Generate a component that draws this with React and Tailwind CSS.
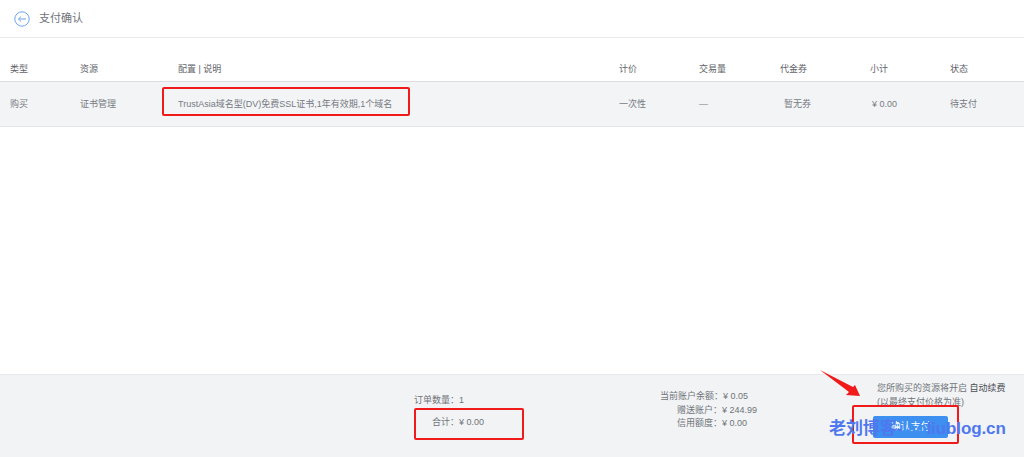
const font = { fontFamily: '"Liberation Sans", "Noto Sans CJK SC", sans-serif' };

const columns = [
  { title: '类型', width: 'w-[70px]' },
  { title: '资源', width: 'w-[98px]' },
  { title: '配置 | 说明', width: 'w-[441px]' },
  { title: '计价', width: 'w-[80px]' },
  { title: '交易量', width: 'w-[81px]' },
  { title: '代金券', width: 'w-[90px]' },
  { title: '小计', width: 'w-[80px]' },
  { title: '状态', width: 'w-[64px]' },
];

const cells = [
  '购买',
  '证书管理',
  'TrustAsia域名型(DV)免费SSL证书,1年有效期,1个域名',
  '一次性',
  '—',
  '暂无券',
  '¥ 0.00',
  '待支付',
];

export default function App() {
  return (
    <div className="relative flex h-[457px] w-[1024px] flex-col overflow-hidden bg-white text-[9px] text-[#777b82]" style={font}>
      <div className="flex h-[38px] items-center gap-[9px] border-b border-[#ececee] pl-[14px] text-[11px] text-[#6f747b]">
        <svg width="16" height="16" viewBox="0 0 16 16" fill="none" stroke="#6ba5ec" strokeWidth="1">
          <circle cx="8" cy="8" r="7.2" />
          <path d="M12 8H4.5M7.2 5.4 4.5 8l2.7 2.6" />
        </svg>
        <span>支付确认</span>
      </div>

      <div className="mt-[17px] flex h-[27px] items-center border-b border-[#dcdde0] pl-[10px] pt-[3px] text-[#5f6369]">
        {columns.map((c) => (
          <div key={c.title} className={c.width}>{c.title}</div>
        ))}
      </div>

      <div className="relative flex h-[45px] items-center border-b border-[#e3e4e8] bg-[#f3f4f6] pl-[10px] pt-[2px]">
        {cells.map((text, i) => (
          <div key={i} className={`${columns[i].width} ${i === 5 ? 'pl-[4px]' : ''} ${i === 6 ? 'pl-[2px]' : ''}`}>{text}</div>
        ))}
        <div className="absolute left-[162px] top-[5px] h-[29px] w-[248px] rounded-[2px] border-2 border-[#f01a1a]" />
      </div>

      <div className="flex-1" />

      <div className="relative flex h-[83px] border-t border-[#e8e9ea] bg-[#f2f3f4] text-[#6f747b]">
        <div className="ml-[414px] mt-[14px] w-[100px] leading-[22px]">
          <div>订单数量：1</div>
          <div className="pl-[18px]">合计：¥ 0.00</div>
        </div>
        <div className="ml-[146px] mt-[15px] w-[130px] leading-[13.5px]">
          <div>当前账户余额：¥ 0.05</div>
          <div className="pl-[17px]">赠送账户：¥ 244.99</div>
          <div className="pl-[17px]">信用额度：¥ 0.00</div>
        </div>
        <div className="ml-[87px] mt-[6px] flex w-[140px] flex-col leading-[14px]">
          <div className="whitespace-nowrap">您所购买的资源将开启 <span className="text-[#4a4e54]">自动续费</span></div>
          <div>(以最终支付价格为准)</div>
          <button className="ml-[-4px] mt-[7px] h-[22px] w-[75px] rounded-[2px] bg-[#3d8ff0] text-[10px] text-white">确认支付</button>
        </div>
        <div className="absolute left-[414px] top-[33px] h-[32px] w-[110px] rounded-[2px] border-2 border-[#f01a1a]" />
        <div className="absolute left-[852px] top-[30px] h-[39px] w-[107px] rounded-[2px] border-2 border-[#f01a1a]" />
        <svg className="absolute left-[818px] top-[-7px] overflow-visible" width="46" height="32" viewBox="0 0 46 32">
          <path d="M2 2 35 19 37 17 42 28 28 27 31 24Z" fill="#f01a1a" />
        </svg>
        <div className="absolute left-[829px] top-[44px] whitespace-nowrap text-[17px] font-bold leading-[20px] tracking-[-0.1px] text-[#4f78ee]">
          老刘博客-<span className="text-[#3d8ff0]">lao</span>liublog.cn
        </div>
      </div>
    </div>
  );
}
